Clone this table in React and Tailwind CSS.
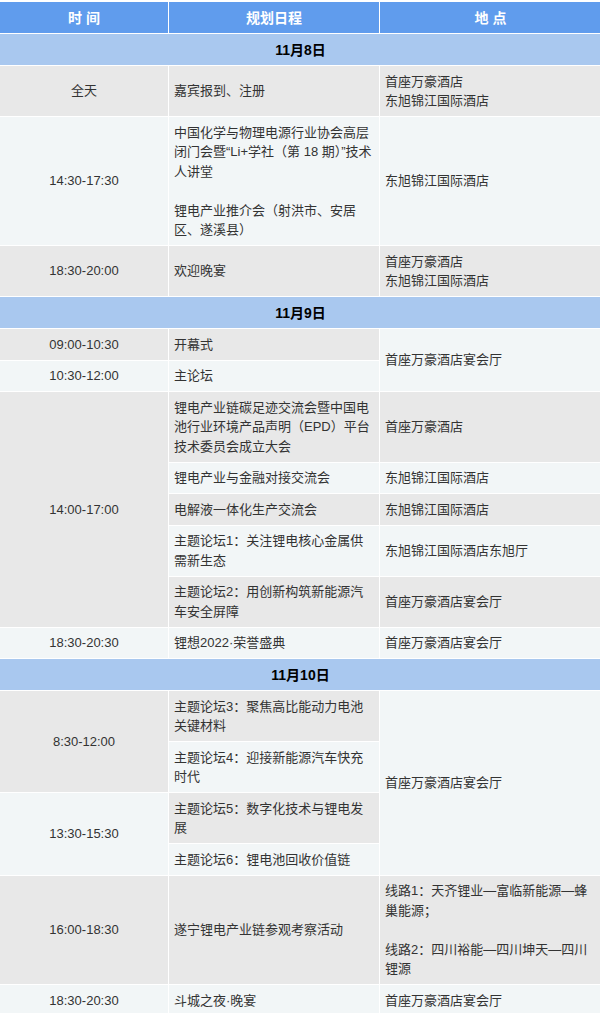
import React from 'react';

const GRAY = 'bg-[#e8e8e8]';
const LIGHT = 'bg-[#f2f6f7]';

const Cell = ({ tone, center, rowSpan, children }) => (
  <td
    rowSpan={rowSpan}
    className={`border border-white px-[5px] py-[5.5px] align-middle text-[13px] leading-[19.5px] text-[#333] ${tone} ${center ? 'text-center' : 'text-left'}`}
  >
    {children}
  </td>
);

const DateRow = ({ children }) => (
  <tr>
    <td
      colSpan="3"
      className="border border-white bg-[#a9c8ef] py-[5.5px] text-center text-[14px] font-bold leading-[20px] text-black"
    >
      {children}
    </td>
  </tr>
);

export default function App() {
  return (
    <div className="w-[600px] overflow-hidden bg-white pt-[2px] font-['Liberation_Sans','Noto_Sans_CJK_SC',sans-serif]">
      <table className="-ml-px w-[602px] table-fixed border-collapse">
        <colgroup>
          <col className="w-[169px]" />
          <col className="w-[211px]" />
          <col className="w-[222px]" />
        </colgroup>
        <thead>
          <tr>
            <th className="border border-t-0 border-white bg-[#609ced] py-[5.5px] text-[14px] font-bold leading-[20px] text-white">
              时 间
            </th>
            <th className="border border-t-0 border-white bg-[#609ced] py-[5.5px] text-[14px] font-bold leading-[20px] text-white">
              规划日程
            </th>
            <th className="border border-t-0 border-white bg-[#609ced] py-[5.5px] text-[14px] font-bold leading-[20px] text-white">
              地 点
            </th>
          </tr>
        </thead>
        <tbody>
          <DateRow>11月8日</DateRow>
          <tr>
            <Cell tone={GRAY} center>全天</Cell>
            <Cell tone={GRAY}>嘉宾报到、注册</Cell>
            <Cell tone={GRAY}>
              首座万豪酒店
              <br />
              东旭锦江国际酒店
            </Cell>
          </tr>
          <tr>
            <Cell tone={LIGHT} center>14:30-17:30</Cell>
            <Cell tone={LIGHT}>
              中国化学与物理电源行业协会高层闭门会暨“Li+学社（第 18 期）”技术人讲堂
              <br />
              <br />
              锂电产业推介会（射洪市、安居区、遂溪县）
            </Cell>
            <Cell tone={LIGHT}>东旭锦江国际酒店</Cell>
          </tr>
          <tr>
            <Cell tone={GRAY} center>18:30-20:00</Cell>
            <Cell tone={GRAY}>欢迎晚宴</Cell>
            <Cell tone={GRAY}>
              首座万豪酒店
              <br />
              东旭锦江国际酒店
            </Cell>
          </tr>

          <DateRow>11月9日</DateRow>
          <tr>
            <Cell tone={GRAY} center>09:00-10:30</Cell>
            <Cell tone={GRAY}>开幕式</Cell>
            <Cell tone={LIGHT} rowSpan={2}>首座万豪酒店宴会厅</Cell>
          </tr>
          <tr>
            <Cell tone={LIGHT} center>10:30-12:00</Cell>
            <Cell tone={LIGHT}>主论坛</Cell>
          </tr>
          <tr>
            <Cell tone={GRAY} center rowSpan={5}>14:00-17:00</Cell>
            <Cell tone={GRAY}>锂电产业链碳足迹交流会暨中国电池行业环境产品声明（EPD）平台技术委员会成立大会</Cell>
            <Cell tone={GRAY}>首座万豪酒店</Cell>
          </tr>
          <tr>
            <Cell tone={LIGHT}>锂电产业与金融对接交流会</Cell>
            <Cell tone={LIGHT}>东旭锦江国际酒店</Cell>
          </tr>
          <tr>
            <Cell tone={GRAY}>电解液一体化生产交流会</Cell>
            <Cell tone={GRAY}>东旭锦江国际酒店</Cell>
          </tr>
          <tr>
            <Cell tone={LIGHT}>主题论坛1：关注锂电核心金属供需新生态</Cell>
            <Cell tone={LIGHT}>东旭锦江国际酒店东旭厅</Cell>
          </tr>
          <tr>
            <Cell tone={GRAY}>主题论坛2：用创新构筑新能源汽车安全屏障</Cell>
            <Cell tone={GRAY}>首座万豪酒店宴会厅</Cell>
          </tr>
          <tr>
            <Cell tone={LIGHT} center>18:30-20:30</Cell>
            <Cell tone={LIGHT}>锂想2022·荣誉盛典</Cell>
            <Cell tone={LIGHT}>首座万豪酒店宴会厅</Cell>
          </tr>

          <DateRow>11月10日</DateRow>
          <tr>
            <Cell tone={GRAY} center rowSpan={2}>8:30-12:00</Cell>
            <Cell tone={GRAY}>主题论坛3：聚焦高比能动力电池关键材料</Cell>
            <Cell tone={LIGHT} rowSpan={4}>首座万豪酒店宴会厅</Cell>
          </tr>
          <tr>
            <Cell tone={LIGHT}>主题论坛4：迎接新能源汽车快充时代</Cell>
          </tr>
          <tr>
            <Cell tone={LIGHT} center rowSpan={2}>13:30-15:30</Cell>
            <Cell tone={GRAY}>主题论坛5：数字化技术与锂电发展</Cell>
          </tr>
          <tr>
            <Cell tone={LIGHT}>主题论坛6：锂电池回收价值链</Cell>
          </tr>
          <tr>
            <Cell tone={GRAY} center>16:00-18:30</Cell>
            <Cell tone={GRAY}>遂宁锂电产业链参观考察活动</Cell>
            <Cell tone={GRAY}>
              线路1：天齐锂业—富临新能源—蜂巢能源；
              <br />
              <br />
              线路2：四川裕能—四川坤天—四川锂源
            </Cell>
          </tr>
          <tr>
            <Cell tone={LIGHT} center>18:30-20:30</Cell>
            <Cell tone={LIGHT}>斗城之夜·晚宴</Cell>
            <Cell tone={LIGHT}>首座万豪酒店宴会厅</Cell>
          </tr>
        </tbody>
      </table>
    </div>
  );
}
